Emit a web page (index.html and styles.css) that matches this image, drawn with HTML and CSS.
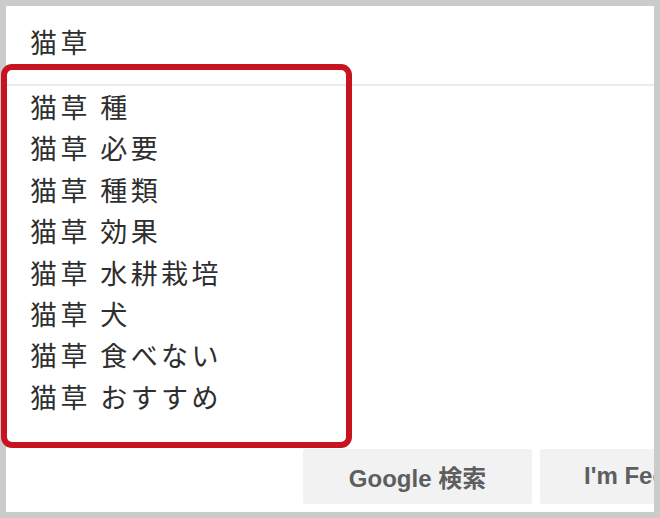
FILE: index.html
```html
<!DOCTYPE html>
<html lang="ja">
<head>
<meta charset="UTF-8">
<meta name="viewport" content="width=device-width, initial-scale=1.0">
<title>猫草 - Google 検索</title>
<link rel="stylesheet" href="styles.css">
</head>
<body>

<div class="frame">
    <!-- 検索ボックス -->
    <div class="search-box">
        <span class="query">猫草</span>
    </div>

    <!-- 候補リスト -->
    <ul class="suggest">
        <li>猫草 種</li>
        <li>猫草 必要</li>
        <li>猫草 種類</li>
        <li>猫草 効果</li>
        <li>猫草 水耕栽培</li>
        <li>猫草 犬</li>
        <li>猫草 食べない</li>
        <li>猫草 おすすめ</li>
    </ul>

    <div class="buttons">
        <button class="btn">Google 検索</button>
        <button class="btn">I'm Feeling Lucky</button>
    </div>
</div>

<!-- 赤枠 -->
<div class="highlight"></div>

</body>
</html>
```

FILE: styles.css
```css
html, body {
    margin: 0;
    padding: 0;
}

body {
    width: 660px;
    height: 518px;
    background: #cbcbcb;
    font-family: "Noto Sans CJK JP", "Noto Sans", sans-serif;
    color: #2e2e2e;
    position: relative;
    overflow: hidden;
}

.frame {
    margin: 6px;
    width: 648px;
    height: 506px;
    background: #fff;
    overflow: hidden;
}

.search-box {
    height: 78px;
    border-bottom: 2px solid #ebebeb;
    padding-left: 24px;
    display: flex;
    align-items: center;
}

.query {
    font-size: 27px;
    letter-spacing: 3.4px;
    line-height: 1;
    margin-top: -8px;
}

.suggest {
    list-style: none;
    margin: 0;
    padding: 0;
}

.suggest li {
    height: 41.4px;
    line-height: 41.4px;
    font-size: 27px;
    letter-spacing: 3.4px;
    padding-left: 24px;
    white-space: nowrap;
}

.buttons {
    display: flex;
    gap: 8px;
    margin-top: 32px;
    padding-left: 297px;
    overflow: hidden;
}

.btn {
    flex: none;
    height: 55px;
    width: 229px;
    border: none;
    border-radius: 3px;
    background: #f2f2f2;
    color: #5e5e5e;
    font-family: "Liberation Sans", "Noto Sans CJK JP", sans-serif;
    font-weight: bold;
    font-size: 24px;
    padding: 0 0 1px;
    white-space: nowrap;
}

.btn + .btn {
    text-align: left;
    padding-left: 44px;
}

.highlight {
    position: absolute;
    left: 1px;
    top: 64px;
    width: 339px;
    height: 372px;
    border: 6px solid #c8141f;
    border-radius: 11px;
}
```
